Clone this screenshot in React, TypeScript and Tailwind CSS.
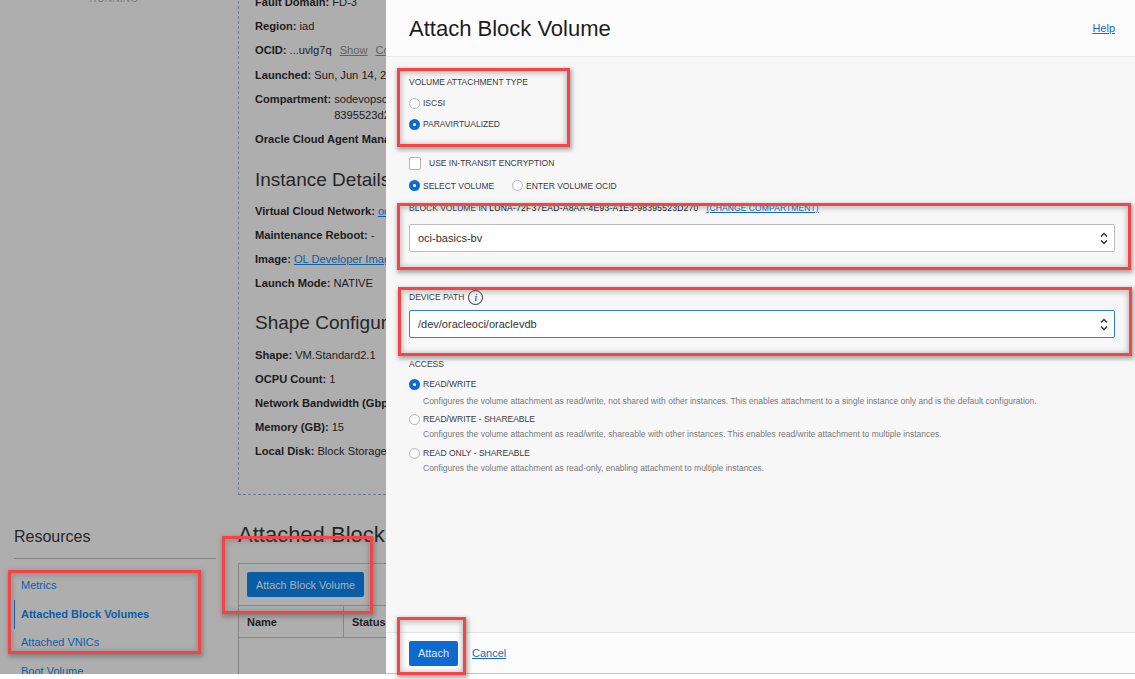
import React from "react";

const Row = ({ label, children, h = "h-6" }: { label: string; children?: React.ReactNode; h?: string }) => (
  <div className={`${h} flex items-center whitespace-nowrap text-[11.15px] text-[#1c1c1c]`}>
    <b className="mr-[3px]">{label}</b>
    {children}
  </div>
);

const Radio = ({ on }: { on?: boolean }) =>
  on ? (
    <span className="w-[11px] h-[11px] rounded-full bg-[#0f6ad0] flex items-center justify-center shrink-0">
      <span className="w-[3px] h-[3px] rounded-full bg-white" />
    </span>
  ) : (
    <span className="w-[11px] h-[11px] rounded-full border border-[#b5b5b5] bg-white shrink-0" />
  );

const Opt = ({ on, label }: { on?: boolean; label: string }) => (
  <div className="flex items-center gap-[3px] text-[8.5px] text-[#3a3a3a] whitespace-nowrap">
    <Radio on={on} />
    <span>{label}</span>
  </div>
);

const Chevrons = () => (
  <svg width="8" height="13" viewBox="0 0 8 13" fill="none" stroke="#333" strokeWidth="1.3" className="shrink-0 mr-[1px]">
    <path d="M1 4.5 4 1.5 7 4.5" />
    <path d="M1 8.5 4 11.5 7 8.5" />
  </svg>
);

const Box = ({ cls }: { cls: string }) => (
  <div className={`absolute border-[3px] border-[#f64444] shadow-[1px_2px_4px_1px_rgba(90,90,90,0.5),inset_0_1px_4px_2px_rgba(90,90,90,0.3)] pointer-events-none ${cls}`} />
);

const Access = ({ on, label, desc, mt, dmt }: { on?: boolean; label: string; desc: string; mt: string; dmt: string }) => (
  <div className={mt}>
    <Opt on={on} label={label} />
    <div className={`ml-[14px] ${dmt} leading-[12px] text-[8.5px] text-[#7a7a7a] whitespace-nowrap`}>{desc}</div>
  </div>
);

export default function App() {
  return (
    <div className="relative w-[1135px] h-[679px] overflow-hidden bg-white font-['Liberation_Sans',Arial,sans-serif]">
      <div className="flex h-[674px]">
        {/* dimmed page */}
        <div className="w-[386px] shrink-0 bg-[#aeaeae] overflow-hidden flex flex-col">
          <div className="flex h-[495px] shrink-0 -mt-[9px]">
            <div className="w-[238px] shrink-0 text-[10px] tracking-[0.3px] text-[#7d7d7d] leading-[15px]">
              <div className="w-[228px] text-center">RUNNING</div>
            </div>
            <div className="flex-1 min-w-0 border-l border-b border-dashed border-[#75808a] pl-4 overflow-hidden h-[504px]">
              <Row label="Fault Domain:" h="h-[23px]">FD-3</Row>
              <Row label="Region:">iad</Row>
              <Row label="OCID:" h="h-[25px]">
                ...uvlg7q<span className="ml-2 underline text-[#636363]">Show</span><span className="ml-2 underline text-[#636363]">Copy</span>
              </Row>
              <Row label="Launched:">Sun, Jun 14, 2020</Row>
              <div className="flex text-[11.15px] leading-[16px] pt-1 h-[40px] whitespace-nowrap text-[#1c1c1c]">
                <b className="mr-[3px]">Compartment:</b>
                <span>sodevopsco<br />8395523d270</span>
              </div>
              <Row label="Oracle Cloud Agent Management" />
              <div className="text-[19px] leading-[24px] mt-[17px] mb-[7px] text-[#262626] whitespace-nowrap">Instance Details</div>
              <Row label="Virtual Cloud Network:"><span className="underline text-[#0b5ea8]">oci</span></Row>
              <Row label="Maintenance Reboot:">-</Row>
              <Row label="Image:"><span className="underline text-[#0b5ea8]">OL Developer Image</span></Row>
              <Row label="Launch Mode:">NATIVE</Row>
              <div className="text-[19px] leading-[24px] mt-[16px] mb-[8px] text-[#262626] whitespace-nowrap">Shape Configuration</div>
              <Row label="Shape:">VM.Standard2.1</Row>
              <Row label="OCPU Count:">1</Row>
              <Row label="Network Bandwidth (Gbps):" />
              <Row label="Memory (GB):">15</Row>
              <Row label="Local Disk:">Block Storage Only</Row>
            </div>
          </div>
          <div className="flex mt-[40px] flex-1 min-h-0">
            <div className="w-[238px] shrink-0 pl-[14px] pr-[22px]">
              <div className="text-[16px] leading-[22px] text-[#262626] pb-[10px] border-b border-[#868686]">Resources</div>
              <div className="text-[11px] text-[#0b5ea8] mt-[19px] leading-[14px] pl-[7px]">Metrics</div>
              <div className="text-[11px] font-bold text-[#0b5ea8] mt-[8px] leading-[29px] pl-[6px] border-l border-[#0b5ea8] whitespace-nowrap">Attached Block Volumes</div>
              <div className="text-[11px] text-[#0b5ea8] mt-[6px] leading-[14px] pl-[7px]">Attached VNICs</div>
              <div className="text-[11px] text-[#0b5ea8] mt-[15px] leading-[14px] pl-[7px]">Boot Volume</div>
            </div>
            <div className="flex-1 min-w-0 overflow-hidden">
              <div className="text-[22px] leading-[26px] -mt-[4px] text-[#262626] whitespace-nowrap">Attached Block Volumes</div>
              <div className="mt-[15px] border-l border-t border-[#868686] h-[200px]">
                <div className="h-[41px] pl-2 pt-2">
                  <div className="w-[117px] h-[25px] pt-[1px] rounded-[2px] bg-[#085da6] text-[#a9b4bd] text-[10.8px] flex items-center justify-center whitespace-nowrap">Attach Block Volume</div>
                </div>
                <div className="flex h-[33px] pb-0 border-y border-[#868686] text-[11px] font-bold text-[#1c1c1c]">
                  <div className="w-[105px] pl-2 pt-[1px] flex items-center border-r border-[#868686]">Name</div>
                  <div className="pl-2 pt-[1px] flex items-center">Status</div>
                </div>
              </div>
            </div>
          </div>
        </div>

        {/* drawer */}
        <div className="flex-1 min-w-0 flex flex-col bg-[#f7f7f7] border-b border-[#c4c4c4]">
          <header className="h-[57px] shrink-0 bg-[#fcfcfc] border-b border-[#ebebeb] flex items-center justify-between pl-[23px] pr-5">
            <h1 className="text-[22px] text-[#1d1d1d]">Attach Block Volume</h1>
            <a className="text-[11px] text-[#1468c4] underline">Help</a>
          </header>
          <main className="flex-1 min-h-0 pl-[23px] pr-5 pt-[20px]">
            <div className="text-[8.5px] leading-[10px] text-[#3a3a3a]">VOLUME ATTACHMENT TYPE</div>
            <div className="mt-[10px]"><Opt label="ISCSI" /></div>
            <div className="mt-[8px]"><Opt on label="PARAVIRTUALIZED" /></div>
            <div className="flex items-center mt-[26px] text-[8.5px] text-[#3a3a3a]">
              <span className="w-3 h-[13px] rounded-[2px] border border-[#b5b5b5] bg-white mr-2" />
              USE IN-TRANSIT ENCRYPTION
            </div>
            <div className="flex gap-[5px] mt-[10px]">
              <div className="w-[98px]"><Opt on label="SELECT VOLUME" /></div>
              <Opt label="ENTER VOLUME OCID" />
            </div>
            <div className="mt-[11px] text-[8.5px] leading-[10px] text-[#3a3a3a] whitespace-nowrap">
              BLOCK VOLUME IN <span className="text-[#111] tracking-[0.25px]">LUNA-72F37EAD-A8AA-4E93-A1E3-98395523D270</span>
              <span className="ml-2 underline tracking-[0.1px] text-[#1468c4]">(CHANGE COMPARTMENT)</span>
            </div>
            <div className="mt-[11px] h-7 bg-white border border-[#bdbdbd] rounded-[2px] flex items-center justify-between pl-2 pr-[5px] text-[11px] text-[#333]">
              oci-basics-bv<Chevrons />
            </div>
            <div className="flex items-center mt-[37px] h-4 text-[8.5px] text-[#3a3a3a]">
              DEVICE PATH
              <span className="ml-1 w-[15px] h-[15px] rounded-full border border-[#333] text-[10px] italic font-['Liberation_Serif',serif] flex items-center justify-center text-[#222]">i</span>
            </div>
            <div className="mt-[5px] h-7 bg-white border border-[#2c7de6] rounded-[2px] flex items-center justify-between pl-2 pr-[5px] text-[11px] text-[#333]">
              /dev/oracleoci/oraclevdb<Chevrons />
            </div>
            <div className="mt-[21px] text-[8.5px] leading-[10px] text-[#3a3a3a]">ACCESS</div>
            <Access mt="mt-[9px]" dmt="mt-[4px]" on label="READ/WRITE" desc="Configures the volume attachment as read/write, not shared with other instances. This enables attachment to a single instance only and is the default configuration." />
            <Access mt="mt-[6px]" dmt="mt-[2px]" label="READ/WRITE - SHAREABLE" desc="Configures the volume attachment as read/write, shareable with other instances. This enables read/write attachment to multiple instances." />
            <Access mt="mt-[7px]" dmt="mt-[2px]" label="READ ONLY - SHAREABLE" desc="Configures the volume attachment as read-only, enabling attachment to multiple instances." />
          </main>
          <footer className="h-[41px] shrink-0 bg-[#fcfcfc] border-t border-[#e4e4e4] flex items-center pl-[23px] gap-[14px]">
            <div className="w-[49px] h-[25px] rounded-[2px] bg-[#0f6ad0] text-[#dfe9f3] text-[11px] flex items-center justify-center">Attach</div>
            <a className="text-[11px] text-[#1468c4] underline">Cancel</a>
          </footer>
        </div>
      </div>

      <Box cls="left-[397px] top-[68px] w-[173px] h-[79px]" />
      <Box cls="left-[397px] top-[203px] w-[734px] h-[67px]" />
      <Box cls="left-[398px] top-[287px] w-[734px] h-[69px]" />
      <Box cls="left-[8px] top-[570px] w-[193px] h-[84px]" />
      <Box cls="left-[222px] top-[536px] w-[151px] h-[78px]" />
      <Box cls="left-[397px] top-[617px] w-[69px] h-[58px]" />
    </div>
  );
}
